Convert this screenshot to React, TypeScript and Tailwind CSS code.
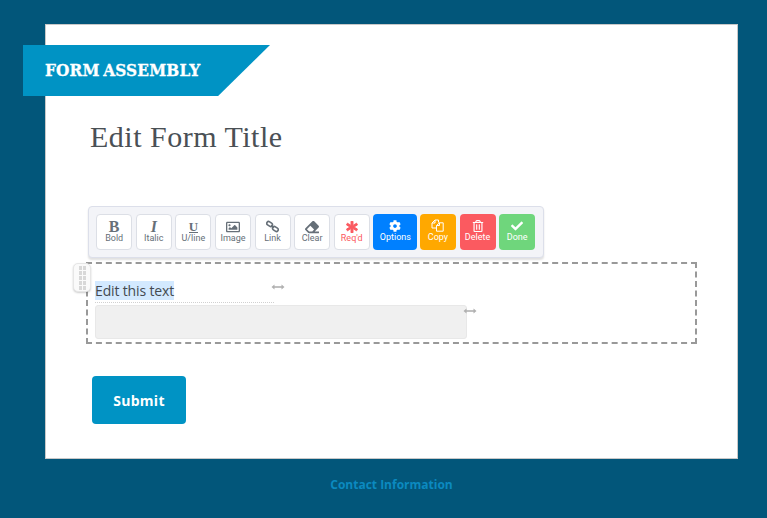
import React from "react";
import { FaRegImage, FaEraser, FaAsterisk, FaCog, FaRegTrashAlt, FaCheck } from "react-icons/fa";

function ToolButton({ icon, label, className }: { icon: React.ReactNode; label: string; className: string }) {
  return (
    <div className={`flex h-9 shrink-0 flex-col items-center rounded-[4px] pt-[5px] text-[9px] leading-[11px] font-['Roboto',sans-serif] ${className}`}>
      <div className="flex h-[13px] items-center justify-center text-[12px]">{icon}</div>
      <span>{label}</span>
    </div>
  );
}

const plain = "w-9 border border-[#dcdfe6] bg-white text-[#666f78]";

function Arrow({ className }: { className: string }) {
  return (
    <svg className={className} width="14" height="6" viewBox="0 0 14 6">
      <path d="M3 3h8" stroke="#b0b0b0" strokeWidth="1.6" />
      <path d="M0.5 3L3.5 0.5V5.5Z M13.5 3L10.5 0.5V5.5Z" fill="#b0b0b0" />
    </svg>
  );
}

function LinkIcon() {
  return (
    <svg width="13" height="13" viewBox="0 0 13 13" fill="none" stroke="currentColor" strokeWidth="1.6">
      <rect x="0.6" y="2.2" width="6" height="3.6" rx="1.8" transform="rotate(35 3.6 4)" />
      <rect x="6.4" y="7.2" width="6" height="3.6" rx="1.8" transform="rotate(35 9.4 9)" />
      <path d="M5 5.5L8 7.5" />
    </svg>
  );
}

function CopyIcon() {
  return (
    <svg width="13" height="13" viewBox="0 0 13 13" fill="none" stroke="currentColor" strokeWidth="1">
      <path d="M5.5 9H1V4L4 1H7.5V3.5" />
      <path d="M4 1V4H1" />
      <path d="M5.5 12.2V6.5L8.5 3.8H12.2V12.2Z" />
      <path d="M8.5 3.8V6.5H5.5" />
    </svg>
  );
}

export default function App() {
  return (
    <div className="flex h-[518px] w-[767px] flex-col overflow-hidden bg-[#02567a] pl-[45px] pt-6">
      <div className="flex h-[435px] w-[693px] shrink-0 flex-col border border-[#c8c8c8] bg-white">
        <div className="mt-5 -ml-[23px] flex h-[51px] w-[247px] items-center bg-[#0093c4] pl-[22px] [clip-path:polygon(0_0,100%_0,79%_100%,0_100%)]">
          <span className="text-[17px] font-bold leading-none tracking-[0.2px] [word-spacing:-2px] text-white [-webkit-text-stroke:0.3px_white] font-['DejaVu_Serif_Condensed','DejaVu_Serif',serif]">FORM ASSEMBLY</span>
        </div>
        <h1 className="ml-11 mt-[23px] text-[30px] font-light leading-[36px] tracking-[0.5px] text-[#4a5055] font-['Liberation_Serif',serif]">Edit Form Title</h1>
        <div className="ml-[42px] mt-[51px] flex h-[52px] w-[456px] items-center gap-[3.6px] rounded-[4px] border border-[#dcdfea] bg-[#f3f4f8] pl-[7.2px] shadow-[0_2px_2px_rgba(0,0,0,0.12)]">
          <ToolButton className={plain} label="Bold" icon={<span className="text-[16px] font-bold leading-none font-['Liberation_Serif',serif]">B</span>} />
          <ToolButton className={plain} label="Italic" icon={<span className="text-[16px] font-bold italic leading-none font-['Liberation_Serif',serif]">I</span>} />
          <ToolButton className={plain} label="U/line" icon={<span className="border-b border-current text-[13px] font-bold leading-[11px] font-['Liberation_Serif',serif]">U</span>} />
          <ToolButton className={plain} label="Image" icon={<FaRegImage className="text-[14px]" />} />
          <ToolButton className={plain} label="Link" icon={<LinkIcon />} />
          <ToolButton className={plain} label="Clear" icon={<FaEraser className="text-[14px]" />} />
          <ToolButton className="w-9 border border-[#dcdfe6] bg-white text-[#fb5a60]" label="Req'd" icon={<FaAsterisk stroke="currentColor" strokeWidth={40} />} />
          <ToolButton className="-mr-px w-11 bg-[#0080ff] text-white" label="Options" icon={<FaCog />} />
          <ToolButton className="w-9 bg-[#ffa800] text-white" label="Copy" icon={<CopyIcon />} />
          <ToolButton className="w-9 bg-[#fb5a60] text-white" label="Delete" icon={<FaRegTrashAlt />} />
          <ToolButton className="w-9 bg-[#6fd67c] text-white" label="Done" icon={<FaCheck />} />
        </div>
        <div className="relative ml-10 mt-1 h-[82px] w-[611px] border-2 border-dashed border-[#999999] pl-[7px] pt-[17px]">
          <div className="absolute -left-[15px] -top-px flex h-[29px] w-[18px] items-center justify-center rounded-[5px] border border-[#e6e6e6] bg-[#fafafa] shadow-[0_1px_2px_rgba(0,0,0,0.2)]">
            <div className="grid grid-cols-2 gap-[1px]">
              {Array.from({ length: 10 }).map((_, i) => (
                <div key={i} className="h-[4px] w-[3px] bg-[#d8d8d8]" />
              ))}
            </div>
          </div>
          <div className="flex h-[22px] w-[179px] items-start border-b border-dotted border-[#d0d0d0]">
            <span className="h-[19px] bg-[#d3e9ff] text-[14px] leading-[20px] tracking-[-0.15px] text-[#444a50] font-['Open_Sans',sans-serif]">Edit this text</span>
          </div>
          <div className="mt-[2px] h-[34px] w-[372px] rounded-[3px] border border-[#e8e8e8] bg-[#f0f0f0]" />
          <Arrow className="absolute left-[183px] top-[20px]" />
          <Arrow className="absolute left-[375px] top-[44px]" />
        </div>
        <button className="ml-[46px] mt-8 h-12 w-[94px] rounded-[4px] bg-[#0093c4] text-[14px] font-bold tracking-[0.3px] text-white font-['Open_Sans',sans-serif]">Submit</button>
      </div>
      <div className="mt-[18px] w-[693px] text-center text-[12px] font-bold leading-[16px] text-[#0b8ac0] font-['Open_Sans',sans-serif]">Contact Information</div>
    </div>
  );
}
